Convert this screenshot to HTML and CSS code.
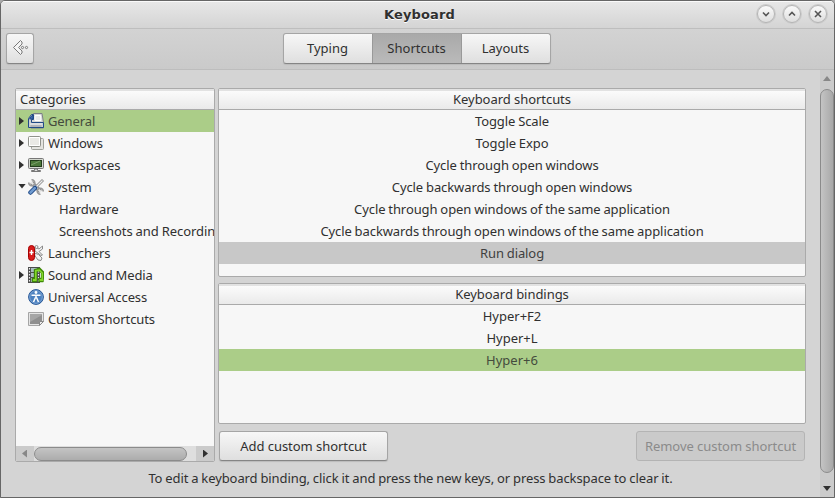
FILE: index.html
```html
<!DOCTYPE html>
<html lang="en">
<head>
<meta charset="utf-8">
<title>Keyboard</title>
<link rel="stylesheet" href="styles.css">
</head>
<body>
<div class="window">
  <header class="titlebar">
    <h1>Keyboard</h1>
    <div class="controls">
      <button class="control"><svg width="16" height="16" viewBox="0 0 16 16"><path d="M5 6.500l3 3 3-3"/></svg></button>
      <button class="control"><svg width="16" height="16" viewBox="0 0 16 16"><path d="M5 9.500l3-3 3 3"/></svg></button>
      <button class="control"><svg width="16" height="16" viewBox="0 0 16 16"><path d="M5 5l6 6M11 5l-6 6"/></svg></button>
    </div>
  </header>
  <nav class="toolbar">
    <button class="back"><svg width="18" height="18" viewBox="0 0 18 18"><g fill="#f4f4f4" stroke="#777"><path d="M8.500 1.500L1.500 8.500l7 7 1.500-1.500V12L6.600 8.500 10 5V3z" stroke-linejoin="round"/><circle cx="10.500" cy="8.500" r="1.100"/><circle cx="14.500" cy="8.500" r="1.100"/></g></svg></button>
    <div class="tabs">
      <button class="tab">Typing</button>
      <button class="tab active">Shortcuts</button>
      <button class="tab">Layouts</button>
    </div>
  </nav>
  <div class="body">
    <main class="content">
      <div class="panes">
        <section class="list categories">
          <h2>Categories</h2>
          <ul class="rows">
            <li class="selected"><i class="arrow"></i><svg class="icon" viewBox="0 0 16 16"><path d="M5.500.5h8.500l1.500 9v5.500H3V4z" fill="#d5d7d8" stroke="#7c8085" stroke-linejoin="round"/><path d="M7 2.500h5.500l.5 5H7z" fill="#e9ebeb" stroke="#fff"/><path d="M.5 14.500V5.500l3-4h2v5h-2v3h12v5z" fill="#c9cdd3" stroke="#214a87" stroke-linejoin="round"/><path d="M1.500 6L4 2.500h1V6z" fill="#3f6fb0" stroke="#214a87"/><path d="M2 11h12" stroke="#eee"/><path d="M2.500 13h11" stroke="#9a9c9e"/></svg>General</li>
            <li><i class="arrow"></i><svg class="icon" viewBox="0 0 16 16"><rect x="3.500" y="3.500" width="12" height="11" rx="1" fill="#e4e4e0" stroke="#a0a29c"/><rect x=".5" y="1.500" width="12" height="10" rx="1" fill="#e9e9e5" stroke="#8f918b"/><path d="M1.500 10.500v-8h10v8z" fill="none" stroke="#fff"/></svg>Windows</li>
            <li><i class="arrow"></i><svg class="icon" viewBox="0 0 16 16"><rect x=".5" y="1.500" width="15" height="10" rx="1" fill="#d3d7cf" stroke="#777"/><rect x="2.500" y="3.500" width="11" height="6" fill="#4c7a3a" stroke="#233c1b"/><path d="M3 8l9-4" stroke="#7c9f6a"/><path d="M6.500 12h3v1.500h3v1h-9v-1h3z" fill="#ddd" stroke="#777"/></svg>Workspaces</li>
            <li><i class="arrow open"></i><svg class="icon" viewBox="0 0 16 16"><path d="M3.500 3.500l9 9" stroke="#888" stroke-width="4"/><path d="M3 3l10 10" stroke="#e8e8e8" stroke-width="2.200"/><path d="M3.500.8A3 3 0 1 1 .8 3.500M12.500 15.200A3 3 0 1 1 15.200 12.500" fill="none" stroke="#999" stroke-width="1.600"/><path d="M15 1L8 8" stroke="#888" stroke-width="2.800"/><path d="M14.500 1.500L8 8" stroke="#eee" stroke-width="1.200"/><path d="M7 9l-4.500 4.500" stroke="#204a87" stroke-width="4.500" stroke-linecap="round"/><path d="M6.800 9.200l-4.300 4.300" stroke="#6f9bd0" stroke-width="2.600" stroke-linecap="round"/></svg>System</li>
            <li class="child">Hardware</li>
            <li class="child">Screenshots and Recording</li>
            <li><i class="arrow none"></i><svg class="icon" viewBox="0 0 16 16"><g fill="#f4f4f4" stroke="#8b8b8b"><path d="M6.500 8l4 1.500 3.500 3.500-1 2.500-3-.5-3-4z"/><path d="M7 2l4 2 3.500-3v3L11 6.500 14.500 10l-1.500.5L7 6z"/><circle cx="8.500" cy="2" r="1.500"/></g><rect x=".5" y=".5" width="6" height="15" rx="3" fill="#d81c1c" stroke="#a40000"/><path d="M3.500 5v5M1.500 7.500h4" stroke="#fff" stroke-width="1.400"/></svg>Launchers</li>
            <li><i class="arrow"></i><svg class="icon" viewBox="0 0 16 16"><path d="M0 0h12v16H0z" fill="#4c4c4c"/><path d="M3 1h6v4H3zM3 6h6v4H3zM3 11h6v4H3z" fill="#a9bcc0"/><path d="M1.500 1v15M10.500 1v15" stroke="#eee" stroke-width="1.200" stroke-dasharray="1.500 1.500"/><path d="M7.500 12.500V3.500l4-1 3 3v7" fill="none" stroke="#3f8a08" stroke-width="3.400"/><path d="M4.500 11.500h4v3h-4zM11 11.500h4v3h-4z" fill="#3f8a08" stroke="#3f8a08" stroke-width="1.500" stroke-linejoin="round"/><path d="M7.800 12.500V3.700l3.500-.7 3 3v6.500" fill="none" stroke="#84d62c" stroke-width="1.600"/><path d="M5 12h3.600v2H5zM11.500 12h3.600v2h-3.600z" fill="#84d62c"/></svg>Sound and Media</li>
            <li><i class="arrow none"></i><svg class="icon" viewBox="0 0 16 16"><circle cx="8" cy="8" r="7.400" fill="#4b80bf" stroke="#285796"/><circle cx="8" cy="8" r="6.300" fill="none" stroke="#7ba4d4"/><circle cx="8" cy="3.500" r="1.400" fill="#fff"/><path d="M3.500 6.300h9M8 6v3.500M7.500 8.500l-2 4.500M8.500 8.500l2 4.500" stroke="#fff" stroke-width="1.500"/></svg>Universal Access</li>
            <li><i class="arrow none"></i><svg class="icon" viewBox="0 0 16 16"><path d="M.5 1.500h15v9l-4 4H.5z" fill="#e4e4e4" stroke="#a5a5a5"/><path d="M2 3h12v7l-3 3H2z" fill="#8f8f8f"/><path d="M2 11l12-7V3H2z" fill="#a6a6a6"/><path d="M15.500 10.500h-4v4z" fill="#eee" stroke="#888"/></svg>Custom Shortcuts</li>
          </ul>
          <div class="hscroll"><i class="tri left"></i><span class="trough"><b class="thumb"></b></span><i class="tri right"></i></div>
        </section>
        <div class="details">
          <section class="list shortcuts">
            <h2>Keyboard shortcuts</h2>
            <ul class="rows">
              <li>Toggle Scale</li>
              <li>Toggle Expo</li>
              <li>Cycle through open windows</li>
              <li>Cycle backwards through open windows</li>
              <li>Cycle through open windows of the same application</li>
              <li>Cycle backwards through open windows of the same application</li>
              <li class="current">Run dialog</li>
            </ul>
          </section>
          <section class="list bindings">
            <h2>Keyboard bindings</h2>
            <ul class="rows">
              <li>Hyper+F2</li>
              <li>Hyper+L</li>
              <li class="selected">Hyper+6</li>
            </ul>
          </section>
          <div class="actions">
            <button class="action">Add custom shortcut</button>
            <button class="action" disabled>Remove custom shortcut</button>
          </div>
        </div>
      </div>
      <p class="hint">To edit a keyboard binding, click it and press the new keys, or press backspace to clear it.</p>
    </main>
    <aside class="vscroll"><i class="tri up"></i><b class="thumb"></b><i class="tri down"></i></aside>
  </div>
</div>
</body>
</html>
```
FILE: styles.css
```css
* { box-sizing: border-box; margin: 0; padding: 0; }
html { background: #aaa; }
body { width: 835px; height: 498px; overflow: hidden; font: 13px/22px "Noto Sans", sans-serif; color: #303030; }
button { font: inherit; color: inherit; }
ul { list-style: none; }
svg { display: block; flex: none; }

.window { height: 498px; display: flex; flex-direction: column; background: #d4d4d4; border: 1px solid #666; border-radius: 5px 5px 0 0; overflow: hidden; }
.titlebar { height: 28px; flex: none; display: grid; grid-template-columns: 1fr auto 1fr; align-items: center; background: linear-gradient(#e7e7e7, #d4d4d4); border-top: 1px solid #fafafa; border-bottom: 1px solid #bebebe; }
.titlebar h1 { grid-column: 2; padding-left: 4px; font: bold 13px/22px "DejaVu Sans", sans-serif; letter-spacing: .15px; text-shadow: 0 1px #fff; }
.controls { display: flex; gap: 8px; justify-content: flex-end; padding: 0 7px 3px 0; }
.control { width: 18px; height: 18px; border: 1px solid #b4b4b4; border-radius: 50%; background: linear-gradient(#fafafa, #dedede); box-shadow: 0 0 0 1px #cbcbcb; }
.control path { fill: none; stroke: #555; stroke-width: 1.6; }

.toolbar { height: 41px; flex: none; display: flex; align-items: flex-start; padding: 4px 5px; background: linear-gradient(#d3d3d3, #cacaca); border-bottom: 1px solid #bdbdbd; }
.back, .tabs, .action { border: 1px solid #a5a5a5; border-bottom-color: #858585; border-radius: 3px; background: linear-gradient(#f7f7f7, #dfdfdf); box-shadow: 0 1px 1px #bbb; }
.back { width: 28px; height: 31px; padding: 0 0 2px 5px; display: flex; align-items: center; }
.tabs { display: flex; width: 268px; height: 31px; margin-left: 249px; overflow: hidden; }
.tab { flex: 1; border: 0; background: none; padding: 0 1px 1px 0; }
.tab.active { flex: 0 0 90px; background: linear-gradient(#a9a9a9, #bababa); border: solid #999; border-width: 0 1px 0; }

.body { flex: 1; min-height: 0; display: flex; }
.content { flex: 1; padding: 18px 14px 0; }
.panes { display: grid; grid-template-columns: 200px 588px; gap: 3px; height: 374px; }
.list { display: flex; flex-direction: column; min-width: 0; min-height: 0; overflow: hidden; border: 1px solid #aaa; border-radius: 2px; background: #f7f7f7; }
.list h2 { height: 21px; flex: none; font-size: 13px; font-weight: 400; line-height: 20px; text-align: center; background: linear-gradient(#e2e2e2 0 2px, #fbfbfb 2px, #eaeaea); border-bottom: 1px solid #aaa; }
.details h2 { letter-spacing: -.05px; }
.rows { flex: 1; min-height: 0; text-align: center; }
.rows li { height: 22px; line-height: 22px; white-space: nowrap; }
.rows .selected { background: #abcd88; color: #444b3d; }
.rows .current { background: #c8c8c8; color: #404040; }
.shortcuts li { letter-spacing: -.09px; word-spacing: -.38px; }
.categories h2 { text-align: left; padding-left: 4px; }
.categories li { display: flex; align-items: center; padding-left: 3px; overflow: hidden; letter-spacing: -.1px; word-spacing: -.3px; }
.categories .child { padding-left: 43px; letter-spacing: -.06px; }
.icon { width: 16px; height: 16px; margin: 0 4px 0 4px; }
.arrow { width: 5px; height: 8px; background: #303030; clip-path: polygon(0 0, 100% 50%, 0 100%); }
.arrow.open { width: 8px; height: 5px; margin: 0 -2px 2px -1px; clip-path: polygon(0 0, 100% 0, 50% 100%); }
.arrow.none { visibility: hidden; }

.hscroll { height: 15px; flex: none; display: flex; align-items: center; background: #cbcbcb; }
.tri { width: 5px; height: 8px; background: #888; clip-path: polygon(0 50%, 100% 0, 100% 100%); }
.tri.left { margin: 0 7px 0 6px; }
.tri.right { margin-left: 7px; background: #303030; clip-path: polygon(0 0, 100% 50%, 0 100%); }
.trough { width: 162px; height: 15px; background: #dedede; }
.thumb { display: block; border: 1px solid #8b8b8b; border-radius: 8px; background: linear-gradient(#c4c4c4, #acacac); }
.hscroll .thumb { width: 153px; height: 14px; margin-top: 1px; }

.details { display: grid; grid-template-rows: 189px 141px 31px; row-gap: 6px; }
.actions { display: flex; justify-content: space-between; padding: 1px 1px 0; }
.action { width: 169px; height: 30px; line-height: 28px; white-space: nowrap; letter-spacing: -.05px; }
.action:disabled { color: #8b8b8b; background: #cacaca; border-color: #b4b4b4; box-shadow: none; }
.hint { margin-top: 5px; text-align: center; letter-spacing: -.09px; word-spacing: -.38px; }

.vscroll { width: 14px; display: flex; flex-direction: column; align-items: center; background: #cbcbcb; }
.tri.up { width: 8px; height: 5px; margin: 6px 0 8px; clip-path: polygon(50% 0, 100% 100%, 0 100%); }
.vscroll .thumb { width: 14px; height: 384px; background: linear-gradient(90deg, #c4c4c4, #a8a8a8); }
.tri.down { width: 8px; height: 5px; margin-top: 13px; background: #303030; clip-path: polygon(0 0, 100% 0, 50% 100%); }
```
